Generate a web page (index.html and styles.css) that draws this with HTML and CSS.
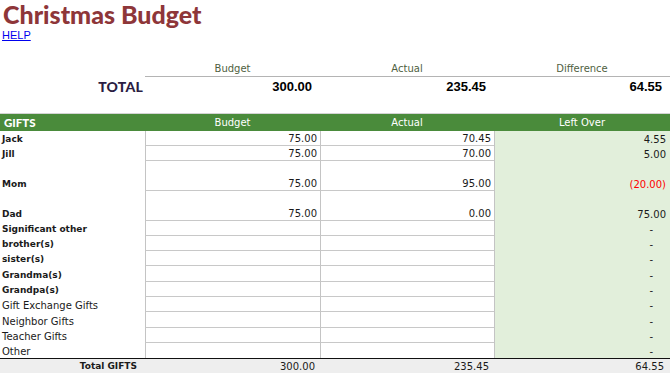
FILE: index.html
```html
<!DOCTYPE html>
<html>
<head>
<meta charset="utf-8">
<link rel="stylesheet" href="styles.css">
</head>
<body>
<h1 class="title">Christmas Budget</h1>
<a class="help" href="#">HELP</a>

<div class="summary">
  <div class="s-head"></div>
  <div class="s-head">Budget</div>
  <div class="s-head">Actual</div>
  <div class="s-head">Difference</div>
  <div class="s-total">TOTAL</div>
  <div class="s-val">300.00</div>
  <div class="s-val">235.45</div>
  <div class="s-val">64.55</div>
</div>

<div class="sheet">
  <div class="hd hd-first">GIFTS</div>
  <div class="hd">Budget</div>
  <div class="hd">Actual</div>
  <div class="hd">Left Over</div>

  <div class="c lbl b r1">Jack</div><div class="c num r1">75.00</div><div class="c num r1">70.45</div><div class="c left r1">4.55</div>
  <div class="c lbl b r1">Jill</div><div class="c num r1">75.00</div><div class="c num r1">70.00</div><div class="c left r1">5.00</div>
  <div class="c lbl b r2">Mom</div><div class="c num r2">75.00</div><div class="c num r2">95.00</div><div class="c left neg r2">(20.00)</div>
  <div class="c lbl b r2">Dad</div><div class="c num r2">75.00</div><div class="c num r2">0.00</div><div class="c left r2">75.00</div>
  <div class="c lbl b r1">Significant other</div><div class="c num r1"></div><div class="c num r1"></div><div class="c left dash r1">-</div>
  <div class="c lbl b r1">brother(s)</div><div class="c num r1"></div><div class="c num r1"></div><div class="c left dash r1">-</div>
  <div class="c lbl b r1">sister(s)</div><div class="c num r1"></div><div class="c num r1"></div><div class="c left dash r1">-</div>
  <div class="c lbl b r1b">Grandma(s)</div><div class="c num r1b"></div><div class="c num r1b"></div><div class="c left dash r1b">-</div>
  <div class="c lbl b r1">Grandpa(s)</div><div class="c num r1"></div><div class="c num r1"></div><div class="c left dash r1">-</div>
  <div class="c lbl r1">Gift Exchange Gifts</div><div class="c num r1"></div><div class="c num r1"></div><div class="c left dash r1">-</div>
  <div class="c lbl r1b">Neighbor Gifts</div><div class="c num r1b"></div><div class="c num r1b"></div><div class="c left dash r1b">-</div>
  <div class="c lbl r1">Teacher Gifts</div><div class="c num r1"></div><div class="c num r1"></div><div class="c left dash r1">-</div>
  <div class="c lbl r1 last">Other</div><div class="c num r1 last"></div><div class="c num r1 last"></div><div class="c left dash r1 last">-</div>

  <div class="t t-lbl">Total GIFTS</div>
  <div class="t t-num">300.00</div>
  <div class="t t-num">235.45</div>
  <div class="t t-num t-end">64.55</div>
</div>
</body>
</html>
```
FILE: styles.css
```css
* { box-sizing: border-box; }
html, body { margin: 0; padding: 0; background: #fff; }
body {
  width: 670px;
  height: 373px;
  overflow: hidden;
  font-family: "DejaVu Sans", "Liberation Sans", sans-serif;
  color: #1a1a1a;
}
.title {
  margin: 0;
  padding: 0 0 0 3px;
  font-family: Lato, "DejaVu Sans", sans-serif;
  font-weight: 900;
  font-size: 25px;
  line-height: 28px;
  color: #8e3639;
  letter-spacing: 0;
}
.help {
  display: block;
  width: max-content;
  margin: 1px 0 0 2px;
  font-family: "Liberation Sans", Arial, sans-serif;
  font-size: 11px;
  line-height: 13px;
  color: #0000ee;
}
.summary {
  display: grid;
  grid-template-columns: 145px 175px 174px 176px;
  margin-top: 20px;
}
.s-head {
  height: 15px;
  font-size: 10px;
  line-height: 14px;
  text-align: center;
  color: #4f5f3f;
  border-bottom: 1px solid #b4b4b4;
}
.s-head:first-child { border-bottom: none; }
.s-total {
  height: 19px;
  font-family: Lato, "DejaVu Sans", sans-serif;
  font-weight: 900;
  font-size: 14px;
  line-height: 20px;
  text-align: right;
  padding-right: 2px;
  color: #2b1d43;
  letter-spacing: 0.2px;
}
.s-val {
  height: 19px;
  font-family: "Liberation Sans", Arial, sans-serif;
  font-weight: bold;
  font-size: 13px;
  line-height: 20px;
  text-align: right;
  padding-right: 8px;
  color: #000;
}
.sheet {
  display: grid;
  grid-template-columns: 145px 175px 174px 176px;
  margin-top: 17px;
  border-top: 1px solid #d4d4d4;
}
.hd {
  height: 17px;
  background: #4a8b3b;
  color: #fff;
  font-size: 10px;
  line-height: 17px;
  text-align: center;
}
.hd-first {
  text-align: left;
  padding-left: 4px;
  font-family: Lato, "DejaVu Sans", sans-serif;
  font-weight: 900;
  font-size: 11.5px;
}
.c {
  display: flex;
  align-items: flex-end;
  font-size: 10px;
  line-height: 13px;
}
.r1 { height: 15px; }
.r1b { height: 16px; }
.r2 { height: 30px; }
.lbl { padding-left: 2px; color: #1a1a1a; }
.b { font-weight: bold; font-size: 9px; line-height: 12px; padding-bottom: 1px; }
.num {
  justify-content: flex-end;
  padding-right: 3px;
  border-left: 1px solid #c4c4c4;
  border-bottom: 1px solid #c8c8c8;
}
.num.last { border-bottom: none; }
.left {
  justify-content: flex-end;
  padding-right: 4px;
  background: #e2efdb;
  border-left: 1px solid #c4c4c4;
}
.neg { color: #f00; }
.dash { padding-right: 17px; }
.t {
  height: 16px;
  background: #eeeeee;
  border-top: 1px solid #111;
  font-size: 10px;
  line-height: 15px;
}
.t-lbl {
  font-weight: bold;
  font-size: 9px;
  text-align: right;
  padding-right: 8px;
}
.t-num {
  text-align: right;
  padding-right: 5px;
}
.t-end { padding-right: 6px; }
```
